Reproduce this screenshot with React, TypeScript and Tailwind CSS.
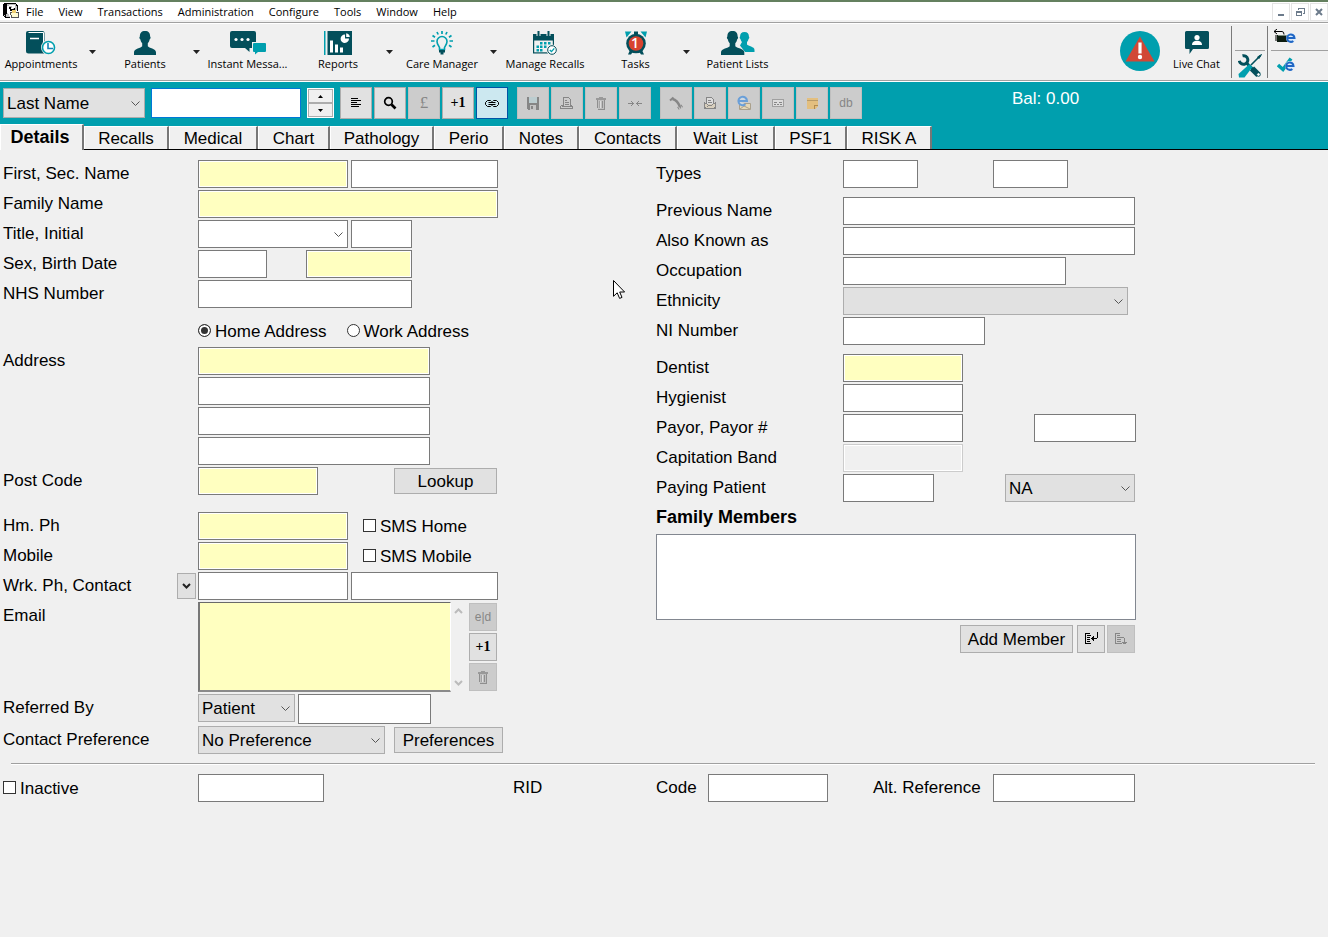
import { useState, type ReactNode } from 'react'
import clsx from 'clsx'

// ── Toolbar icons ──────────────────────────────────────────────────────────

const DARK = '#034f5b'
const TEAL = '#009fae'

function AppointmentsIcon() {
  return (
    <svg width="30" height="24" viewBox="0 0 30 24">
      <path d="M2 0H16.5a2 2 0 0 1 2 2V22.500H2.500A2.500 2.500 0 0 1 0 20V2a2 2 0 0 1 2-2Z" fill={DARK} />
      <path d="M2.500 1.500H17.500V21" stroke="#fff" fill="none" />
      <path d="M4 7.500h9" stroke="#fff" strokeWidth="1.500" />
      <circle cx="22.500" cy="16.500" r="7.500" fill="#f0f0f0" />
      <circle cx="22.500" cy="16.500" r="6" fill="#fff" stroke={TEAL} strokeWidth="1.600" />
      <path d="M22 12v5.500h5" stroke="#1583b5" strokeWidth="1.600" fill="none" />
    </svg>
  )
}

function PersonIcon() {
  return (
    <svg width="22" height="24" viewBox="0 0 22 24">
      <path d="M11 0c3.500 0 5.300 2 5.100 5.500.8.300.6 2.400-.5 3-.3 2-1 3-1.800 3.700v3c1 1.800 8.200 2 8.200 6.300V24H0v-2.500c0-4.300 7.200-4.500 8.200-6.300v-3C7.400 11.500 6.700 10.500 6.400 8.500c-1.100-.6-1.300-2.700-.5-3C5.700 2 7.500 0 11 0Z" fill={DARK} />
    </svg>
  )
}

function MessageIcon() {
  return (
    <svg width="36" height="24" viewBox="0 0 36 24">
      <path d="M2 0H24a2 2 0 0 1 2 2V11h-4v6H19.500V21L15 17H2a2 2 0 0 1-2-2V2a2 2 0 0 1 2-2Z" fill={DARK} />
      <g fill="#fff"><circle cx="6" cy="8.500" r="1.600" /><circle cx="12" cy="8.500" r="1.600" /><circle cx="18" cy="8.500" r="1.600" /></g>
      <path d="M24 12H35a1 1 0 0 1 1 1v7a1 1 0 0 1-1 1H28l-3 2.500V21H24a1 1 0 0 1-1-1V13a1 1 0 0 1 1-1Z" fill={TEAL} />
    </svg>
  )
}

function ReportsIcon() {
  return (
    <svg width="28" height="24" viewBox="0 0 28 24">
      <path d="M0 0h1.500v24H0z" fill={TEAL} />
      <path d="M3.500 0H28v24H3.500z" fill={DARK} />
      <path d="M6 9.500h3V21.500H6zM11 13.500h3v8h-3zM16 16.500h3v5h-3z" fill="#fff" />
      <path d="M21 3.500V7.500H25A4.200 4.200 0 1 1 21 3.500Z" fill="#fff" />
      <path d="M22.200 2.200A4.200 4.200 0 0 1 25.800 6H22.200Z" fill="#fff" />
    </svg>
  )
}

function BulbIcon() {
  return (
    <svg width="22" height="24" viewBox="0 0 22 24" fill="none">
      <path d="M8.500 18.500v-2C7.500 14.500 6 13 6 10.500a5 5 0 0 1 10 0c0 2.500-1.500 4-2.500 6v2Z" stroke={TEAL} strokeWidth="1.600" />
      <path d="M11 0v3M6 1l1.200 2.500M16 1l-1.200 2.500M1.500 4.500l2.500 1.800M20.500 4.500l-2.500 1.800M0 10h3.500M18.500 10H22M1.500 16l2.500-1.800M20.500 16l-2.500-1.800" stroke={TEAL} strokeWidth="1.700" />
      <path d="M8 19h6v2.500H12.500V23.500h-3V21.500H8z" fill={DARK} />
    </svg>
  )
}

function RecallsIcon() {
  return (
    <svg width="24" height="24" viewBox="0 0 24 24">
      <path d="M0 3H21V22.500H0z" fill={DARK} />
      <path d="M1.200 9.500h18.600v11.800H1.200z" fill="#f0f0f0" />
      <path d="M5.500 0v5M15.500 0v5" stroke="#f0f0f0" strokeWidth="4" />
      <path d="M5.500 0v5M15.500 0v5" stroke={DARK} strokeWidth="2" />
      <path d="M7 11h2.500v2.500H7zM11 11h2.500v2.500H11zM15 11h2.500v2.500H15zM3.500 14.500H6V17H3.500zM7 14.500h2.500V17H7zM11 14.500h2.500V17H11zM3.500 18H6v2.500H3.500zM7 18h2.500v2.500H7z" fill={TEAL} />
      <circle cx="19" cy="19" r="5.500" fill="#f0f0f0" />
      <circle cx="19" cy="19" r="4.300" fill="#fff" stroke={DARK} />
      <path d="M16.800 19l1.700 1.600 2.800-3.200" stroke={TEAL} strokeWidth="1.400" fill="none" />
    </svg>
  )
}

function TasksIcon() {
  return (
    <svg width="22" height="24" viewBox="0 0 22 24">
      <path d="M0 0.500l6.500 0L1.500 6.500zM22 0.500l-6.500 0 5 6z" fill={TEAL} />
      <path d="M9 0.500h4v3H9z" fill={DARK} />
      <path d="M5 19l-2 4.500h3l2-3zM17 19l2 4.500h-3l-2-3z" fill={DARK} />
      <circle cx="11" cy="12.500" r="9.800" fill={DARK} />
      <circle cx="11" cy="12.500" r="7.300" fill="#d8432f" />
      <text x="10" y="17" textAnchor="middle" fontFamily="Open Sans, sans-serif" fontSize="14" fontWeight="600" fill="#fff">1</text>
    </svg>
  )
}

function PeopleIcon() {
  return (
    <svg width="34" height="24" viewBox="0 0 34 24">
      <path d="M23.500 1c3 0 4.600 1.800 4.400 4.500.7.300.5 2-.4 2.600-.3 1.500-.8 2.400-1.500 3v2.500c1 1.700 7.500 1.900 7.500 5.500v2H24L19 14.500 21 11.100c-.7-.6-1.200-1.500-1.500-3-.9-.6-1.100-2.300-.4-2.600C18.900 2.800 20.500 1 23.500 1Z" fill={TEAL} />
      <path d="M11.500 0c3.500 0 5.300 2 5.100 5.500.8.300.6 2.400-.5 3-.3 2-1 3-1.800 3.700v3c1 1.800 9 2 9 6.300V24H0v-2.500c0-4.300 7.700-4.500 8.700-6.300v-3C7.900 11.500 7.200 10.500 6.900 8.500c-1.100-.6-1.300-2.700-.5-3C6.200 2 8 0 11.500 0Z" fill={DARK} />
    </svg>
  )
}

function LiveChatIcon() {
  return (
    <svg width="24" height="24" viewBox="0 0 24 24">
      <path d="M1.500 0H22.500A1.500 1.500 0 0 1 24 1.500V16.500A1.500 1.500 0 0 1 22.500 18H8L4.500 23V18h-3A1.500 1.500 0 0 1 0 16.500V1.500A1.500 1.500 0 0 1 1.500 0Z" fill={DARK} />
      <circle cx="12" cy="6.500" r="2.600" fill="#fff" />
      <path d="M7 14c0-3 2.300-4.300 5-4.300s5 1.300 5 4.300z" fill="#fff" />
    </svg>
  )
}

function AlertIcon() {
  return (
    <svg width="40" height="40" viewBox="0 0 40 40">
      <circle cx="20" cy="20" r="20" fill={TEAL} />
      <path d="M20 5.500L34.500 30.500H5.500z" fill="#d14836" />
      <path d="M18.400 11.500h3.200V22.500h-3.200z" fill="#fff" />
      <circle cx="20" cy="26" r="2.200" fill="#fff" />
    </svg>
  )
}

function ToolsIcon() {
  return (
    <svg width="24" height="24" viewBox="0 0 24 24" fill="none">
      <path d="M22.500 1.500L13 11" stroke={DARK} strokeWidth="1.600" />
      <path d="M23.500 0.500l-4 2.500 1.500 1.500z" fill={DARK} stroke={DARK} />
      <path d="M14 14.500L20.500 21" stroke={DARK} strokeWidth="6" />
      <path d="M8.500 9L15 15.500" stroke={DARK} strokeWidth="3" />
      <path d="M11.500 10L14.500 13 6.500 23.500H1L0.500 20z" fill={TEAL} />
      <path d="M4.500 1.800a4.300 4.300 0 1 1-3.200 5" stroke={DARK} strokeWidth="3" />
      <circle cx="20.500" cy="20.500" r="1.800" fill="#fff" stroke={DARK} />
    </svg>
  )
}

function Globe({ cx, cy }: { cx: number; cy: number }) {
  return (
    <g fill="none">
      <circle cx={cx} cy={cy} r="5" fill="#dcecfb" />
      <path d={`M${cx - 3} ${cy}h6.500a3.700 3.700 0 1 0-1.200 2.900`} stroke="#1f66c4" strokeWidth="2" />
    </g>
  )
}

function CardReaderIcon() {
  return (
    <svg width="24" height="16" viewBox="0 0 24 16">
      <path d="M1 2.500h8q2 0 2 3M1 2.500l3-2.500M1 2.500l3 2.500" stroke="#000" fill="none" />
      <path d="M2 6h3v6H2z" fill="#777" />
      <path d="M4 6H16v7H4z" fill="#0c1c10" />
      <path d="M5 6.500h9" stroke="#7b8b7b" />
      <Globe cx={18} cy={9} />
    </svg>
  )
}

function CheckGlobeIcon() {
  return (
    <svg width="20" height="16" viewBox="0 0 20 16">
      <path d="M1 8l5 4.500L14 1.500" stroke={TEAL} strokeWidth="3.500" fill="none" />
      <Globe cx={13} cy={9} />
    </svg>
  )
}

function AppIcon() {
  return (
    <svg width="16" height="16" viewBox="0 0 16 16" shapeRendering="crispEdges">
      <path d="M0.500 0.500H12.500L14.500 3V8M0.500 0.500V12.500L3 14.500H7" fill="#c0c0c0" stroke="#000" />
      <path d="M1 1h3v10H3v2L1 12zM6 4h2v2h3V4h1v4H7z" fill="#000" />
      <path d="M6 2h6v1H6zM4 5h2v5H4zM9 3h3v2H9z" fill="#fff" />
      <path d="M7.500 9.500H15.500V14.500H8.500z" fill="#fffbd0" stroke="#555" />
      <path d="M9 7h4v3H9z" fill="#f0d070" />
    </svg>
  )
}

// ── Small glyphs used on the square buttons ────────────────────────────────

const GREY = '#868686'

function Glyph({ children }: { children: ReactNode }) {
  return <svg width="16" height="16" viewBox="0 0 16 16" fill="none" shapeRendering="crispEdges">{children}</svg>
}

const linesGlyph = <Glyph><path d="M3 3.500h7M3 5.500h10M3 7.500h6M3 9.500h10M3 11.500h8" stroke="#000" /></Glyph>

const searchGlyph = (
  <svg width="16" height="16" viewBox="0 0 16 16" fill="none">
    <circle cx="6.500" cy="6.500" r="3.800" stroke="#000" strokeWidth="1.700" />
    <path d="M9.500 9.500l4 4" stroke="#000" strokeWidth="2.600" />
  </svg>
)

const linkGlyph = (
  <svg width="16" height="16" viewBox="0 0 16 16" fill="none" stroke="#000">
    <path d="M7.500 6.500L6.500 5.500H3.500L1.500 7.500V9.500L3.500 11.500H6.500L7.500 10.500M8.500 6.500L9.500 5.500h3l2 2v2l-2 2H9.500L8.500 10.500" />
    <path d="M4.500 7.500h7M4.500 9.500h7" />
  </svg>
)

const saveGlyph = (
  <Glyph>
    <path d="M2 2h12v13H3L2 14z" fill={GREY} />
    <path d="M4 2h8v6H4z" fill="#bccdd0" />
    <path d="M5 10h6v5H5z" fill="#c4c4c4" />
    <path d="M6 11h2v3H6z" fill={GREY} />
  </Glyph>
)

const printGlyph = (
  <Glyph>
    <path d="M4.500 10.500V2.500h5l2 2v6M1.500 10.500h3M11.500 10.500l2 1v2h-12v-3" stroke={GREY} />
    <path d="M6 5.500h2M6 7.500h4M6 9.500h4M3 11.500h9" stroke={GREY} />
  </Glyph>
)

const trashGlyph = (
  <Glyph>
    <path d="M3 3h10v2H3zM6 2h4v1H6z" fill="#999" />
    <path d="M4 5h8v9H5l-1-1z" fill="#c0c0c0" />
    <path d="M4.500 5v8M9.500 6v7M11.500 5v9M5 14.500h7" stroke="#8f8f8f" />
    <path d="M6.500 6v7" stroke="#a4a4a4" />
    <path d="M7.500 6v7" stroke="#ddd" />
  </Glyph>
)

const mergeGlyph = <Glyph><path d="M1 8.500h6M9 8.500h6M4.500 6v1M5.500 7v1M5.500 9v1M4.500 10v1M11.500 6v1M10.500 7v1M10.500 9v1M11.500 10v1" stroke={GREY} /></Glyph>

const phoneGlyph = (
  <svg width="16" height="16" viewBox="0 0 16 16" fill="none">
    <path d="M2 5.500L5.500 2.500" stroke={GREY} strokeWidth="2" />
    <path d="M4.500 4C9 5 10.500 8 12 12" stroke={GREY} strokeWidth="2.500" />
    <path d="M10 13.500L14.500 10.500" stroke={GREY} strokeWidth="3" strokeDasharray="1 1" />
  </svg>
)

const letterGlyph = (
  <Glyph>
    <path d="M2 8h12v6H2z" fill="#d8cfbd" />
    <path d="M4.500 9V2.500h5l2 2V9" fill="#ddd" stroke={GREY} />
    <path d="M6 5.500h3M6 7.500h4" stroke={GREY} />
    <path d="M2.500 7v6.500h11V7M3 8.500h1M5 9.500h1M6 10.500h4M10 9.500h1M12 8.500h1M3 12.500h1M5 11.500h1M12 12.500h1" stroke={GREY} />
  </Glyph>
)

const webMailGlyph = (
  <svg width="16" height="16" viewBox="0 0 16 16" fill="none">
    <path d="M3.500 8.500h11v6h-11z" fill="#e4d7b7" stroke="#aaa08c" />
    <path d="M4 14l4-3 6 3" stroke="#aaa08c" />
    <path d="M3 6h8a4.300 4.300 0 1 0-1.500 3.300" fill="#cfd8e0" stroke="#6a9fd8" strokeWidth="2" />
  </svg>
)

const cardGlyph = (
  <Glyph>
    <path d="M2.500 4.500h11v7h-11z" fill="#dcdcdc" stroke="#a0a0a0" />
    <path d="M4 7.500h3M9 7.500h3M4 9.500h2M7 9.500h2M10 9.500h2" stroke={GREY} />
  </Glyph>
)

const noteGlyph = (
  <Glyph>
    <path d="M3 3h11v8l-3 3H3z" fill="#e3bf7f" />
    <path d="M3 5.500h11" stroke="#b89b68" />
    <path d="M10.500 14v-3.500H14" stroke="#b08b50" />
  </Glyph>
)

const enterGlyph = (
  <Glyph>
    <path d="M7 2.500H2.500v10H8" stroke="#000" />
    <path d="M4 4.500h4M4 6.500h3M4 8.500h3M4 10.500h3M14.500 1v6M14 7.500H8M9.500 6v3M10.500 5v5" stroke="#000" />
  </Glyph>
)

const moveDownGlyph = (
  <Glyph>
    <path d="M7 2.500H2.500v10H9" stroke={GREY} />
    <path d="M4 4.500h3M4 6.500h4M4 8.500h4M4 10.500h4M8 6.500h3M11.500 7v6M9 11.500h5M10 12.500h3" stroke={GREY} />
  </Glyph>
)

const plusOne = <span className="font-['Liberation_Serif',serif] text-sm font-bold leading-4">+1</span>

// ── Controls ───────────────────────────────────────────────────────────────

function TextBox({ className, required, tall, ...rest }: React.InputHTMLAttributes<HTMLInputElement> & { tall?: boolean }) {
  return (
    <input
      type="text"
      className={clsx(
        'border px-1 shadow-[inset_0_0_0_1px_#fff] outline-none',
        tall ? 'h-[30px]' : 'h-7',
        rest.disabled ? 'border-[#ccc] bg-[#f0f0f0]' : 'border-[#7a7a7a]',
        !rest.disabled && (required ? 'bg-[#ffffc0]' : 'bg-white'),
        className,
      )}
      {...rest}
    />
  )
}

function DropDown({ options, className, white, ...rest }: {
  options: string[]; className: string; white?: boolean
} & React.SelectHTMLAttributes<HTMLSelectElement>) {
  return (
    <div className={clsx('relative', className)}>
      <select
        className={clsx('h-full w-full appearance-none border pl-[3px] pt-px outline-none', white ? 'border-[#7a7a7a] bg-white' : 'border-[#adadad] bg-[#e1e1e1]')}
        {...rest}
      >
        {options.map((o) => <option key={o}>{o}</option>)}
      </select>
      <svg className="pointer-events-none absolute right-[5px] top-1/2 -mt-[2px]" width="9" height="6" viewBox="0 0 9 6" fill="none">
        <path d="M0.500 0.500l4 4 4-4" stroke="#555" />
      </svg>
    </div>
  )
}

function SquareButton({ label, disabled, active, small, children }: {
  label: string; disabled?: boolean; active?: boolean; small?: boolean; children: ReactNode
}) {
  return (
    <button
      type="button"
      aria-label={label}
      disabled={disabled}
      className={clsx(
        'flex shrink-0 items-center justify-center border',
        small ? 'size-7' : 'size-8',
        disabled && 'border-[#bfbfbf] bg-[#ccc] text-[#868686]',
        active && 'border-[#0054a6] bg-[#cce8f0]',
        !disabled && !active && 'border-[#adadad] bg-[#e1e1e1]',
      )}
    >
      {children}
    </button>
  )
}

function PushButton({ className, children }: { className: string; children: ReactNode }) {
  return <button type="button" className={clsx('border border-[#adadad] bg-[#e1e1e1] pt-[2px] leading-[22px]', className)}>{children}</button>
}

function Check({ id, label }: { id: string; label: string }) {
  return (
    <span className="flex h-[26px] items-center gap-1">
      <input id={id} type="checkbox" className="size-[13px] appearance-none border border-[#333] bg-white checked:bg-[#333]" />
      <label htmlFor={id} className="pt-[3px]">{label}</label>
    </span>
  )
}

function Radio({ id, label, checked, onChange }: { id: string; label: string; checked: boolean; onChange: () => void }) {
  return (
    <span className="flex h-5 items-center gap-1">
      <input
        id={id}
        type="radio"
        name="addressType"
        checked={checked}
        onChange={onChange}
        className="size-[13px] appearance-none rounded-full border border-[#333] bg-white shadow-[inset_0_0_0_2px_#fff] checked:bg-[#333]"
      />
      <label htmlFor={id} className="pt-[3px]">{label}</label>
    </span>
  )
}

function Row({ label, htmlFor, narrow, children }: { label: string; htmlFor: string; narrow?: boolean; children: ReactNode }) {
  return (
    <div className="flex">
      <label htmlFor={htmlFor} className={clsx('shrink-0 leading-7', narrow ? 'w-[187px]' : 'w-[195px]')}>{label}</label>
      {children}
    </div>
  )
}

// ── Menu bar ───────────────────────────────────────────────────────────────

const MENUS = ['File', 'View', 'Transactions', 'Administration', 'Configure', 'Tools', 'Window', 'Help']

function MenuBar() {
  const box = 'flex h-[18px] w-[18px] items-center justify-center border border-[#e4e4e4] bg-white'
  return (
    <header className="border-b border-white border-t-2 border-t-[#64805f]">
      <div className="flex h-5 items-start border-b-2 border-[#f0f0f0] bg-white font-['Open_Sans',sans-serif] text-[11px]">
        <span className="ml-[3px] pt-px"><AppIcon /></span>
        <nav className="flex gap-[15px] pl-[7px]">
          {MENUS.map((m) => <button key={m} type="button" className="leading-5">{m}</button>)}
        </nav>
        <div className="ml-auto flex gap-px pt-px">
          <button type="button" aria-label="Minimise" className={box}><Glyph><path d="M5 11h6" stroke="#6c7b8b" strokeWidth="2" /></Glyph></button>
          <button type="button" aria-label="Restore" className={box}>
            <Glyph><path d="M6.500 6V4.500h6v5H11M6 4.500h7M4 8.500h6M4.500 7.500h5v4h-5z" stroke="#6c7b8b" /></Glyph>
          </button>
          <button type="button" aria-label="Close" className={box}>
            <svg width="16" height="16" viewBox="0 0 16 16"><path d="M5 5l6 6M11 5l-6 6" stroke="#6c7b8b" strokeWidth="2" /></svg>
          </button>
        </div>
      </div>
      <div className="h-px bg-[#a0a0a0]" />
    </header>
  )
}

// ── Main toolbar ───────────────────────────────────────────────────────────

const TOOLS = [
  { label: 'Appointments',     icon: <AppointmentsIcon />, size: 'w-[82px]',      menu: true },
  { label: 'Patients',         icon: <PersonIcon />,       size: 'w-[84px] pl-[2px]', menu: true },
  { label: 'Instant Messa...', icon: <MessageIcon />,      size: 'w-[83px]' },
  { label: 'Reports',          icon: <ReportsIcon />,      size: 'ml-2 w-[82px]', menu: true },
  { label: 'Care Manager',     icon: <BulbIcon />,         size: 'ml-[2px] w-[82px]', menu: true },
  { label: 'Manage Recalls',   icon: <RecallsIcon />,      size: 'w-[84px]' },
  { label: 'Tasks',            icon: <TasksIcon />,        size: 'ml-2 w-[81px]', menu: true },
  { label: 'Patient Lists',    icon: <PeopleIcon />,       size: 'w-[83px]' },
]

function Toolbar() {
  return (
    <div className="flex h-[57px] border-b border-[#a0a0a0] font-['Open_Sans',sans-serif] text-[11px]">
      {TOOLS.map((t) => (
        <div key={t.label} className="flex shrink-0">
          <button type="button" className={clsx('flex flex-col items-center whitespace-nowrap pt-[7px]', t.size)}>
            {t.icon}
            <span className="leading-[18px]">{t.label}</span>
          </button>
          {t.menu && (
            <button type="button" aria-label={`${t.label} menu`} className="flex w-5 items-center justify-center">
              <svg width="7" height="4" viewBox="0 0 7 4"><path d="M0 0h7L3.500 4z" fill="#222" /></svg>
            </button>
          )}
        </div>
      ))}
      <div className="ml-auto flex">
        <button type="button" aria-label="Alerts" className="pt-[7px]"><span className="block h-full"><AlertIcon /></span></button>
        <button type="button" className="flex w-[71px] flex-col items-center whitespace-nowrap pl-[2px] pt-[7px]">
          <LiveChatIcon />
          <span className="leading-[18px]">Live Chat</span>
        </button>
        <div className="my-[2px] w-px bg-[#7a7a7a]" />
        <button type="button" aria-label="Tools" className="ml-[3px] w-[30px]">
          <span className="block h-[27px] border-b border-[#a0a0a0]" />
          <span className="flex h-[29px] items-center justify-center"><ToolsIcon /></span>
        </button>
        <div className="my-[2px] ml-[2px] w-px bg-[#7a7a7a]" />
        <div className="ml-[3px] w-[57px]">
          <button type="button" aria-label="Card reader" className="flex h-[27px] w-full items-center border-b border-[#a0a0a0] pl-[2px]"><CardReaderIcon /></button>
          <button type="button" aria-label="Online check" className="flex h-7 w-full items-center pl-[6px]"><CheckGlobeIcon /></button>
        </div>
      </div>
    </div>
  )
}

// ── Search bar and tabs ────────────────────────────────────────────────────

function SearchBar() {
  return (
    <div className="flex h-[42px] items-center pl-[3px]">
      <DropDown options={['Last Name']} className="h-[30px] w-[142px]" aria-label="Search by" />
      <input type="text" aria-label="Search" className="ml-[6px] h-[30px] w-[150px] border border-[#0078d7] bg-white px-1 outline-none" />
      <div className="ml-[6px] flex h-[30px] w-[27px] flex-col border border-white">
        <button type="button" aria-label="Previous" className="flex flex-1 items-center justify-center border border-[#adadad] bg-[#f0f0f0]">
          <svg width="5" height="3" viewBox="0 0 5 3"><path d="M0 3h5L2.500 0z" /></svg>
        </button>
        <button type="button" aria-label="Next" className="flex flex-1 items-center justify-center border border-[#adadad] bg-[#f0f0f0]">
          <svg width="5" height="3" viewBox="0 0 5 3"><path d="M0 0h5L2.500 3z" /></svg>
        </button>
      </div>
      <div className="ml-[6px] flex gap-[2px]">
        <SquareButton label="List">{linesGlyph}</SquareButton>
        <SquareButton label="Find">{searchGlyph}</SquareButton>
        <SquareButton label="Account" disabled><span className="font-['Liberation_Serif',serif] leading-5">£</span></SquareButton>
        <SquareButton label="Add patient">{plusOne}</SquareButton>
        <SquareButton label="Link" active>{linkGlyph}</SquareButton>
      </div>
      <div className="ml-[9px] flex gap-[2px]">
        <SquareButton label="Save" disabled>{saveGlyph}</SquareButton>
        <SquareButton label="Print" disabled>{printGlyph}</SquareButton>
        <SquareButton label="Delete" disabled>{trashGlyph}</SquareButton>
        <SquareButton label="Merge" disabled>{mergeGlyph}</SquareButton>
      </div>
      <div className="ml-[9px] flex gap-[2px]">
        <SquareButton label="Call" disabled>{phoneGlyph}</SquareButton>
        <SquareButton label="Letter" disabled>{letterGlyph}</SquareButton>
        <SquareButton label="Email" disabled>{webMailGlyph}</SquareButton>
        <SquareButton label="Card" disabled>{cardGlyph}</SquareButton>
        <SquareButton label="Note" disabled>{noteGlyph}</SquareButton>
        <SquareButton label="Database" disabled><span className="text-xs leading-4">db</span></SquareButton>
      </div>
      <div className="ml-[150px] -mt-[9px] whitespace-nowrap text-white">Bal: 0.00</div>
    </div>
  )
}

const TABS = [
  { label: 'Details',   width: 'w-[84px] pr-[3px]' },
  { label: 'Recalls',   width: 'w-[85px]' },
  { label: 'Medical',   width: 'w-[89px]' },
  { label: 'Chart',     width: 'w-[72px]' },
  { label: 'Pathology', width: 'w-[104px]' },
  { label: 'Perio',     width: 'w-[70px]' },
  { label: 'Notes',     width: 'w-[75px]' },
  { label: 'Contacts',  width: 'w-[98px]' },
  { label: 'Wait List', width: 'w-[98px]' },
  { label: 'PSF1',      width: 'w-[72px]' },
  { label: 'RISK A',    width: 'w-[85px]' },
]

function Tabs() {
  const [current, setCurrent] = useState('Details')
  return (
    <div role="tablist" className="flex h-[26px] items-end border-b border-black">
      {TABS.map((t) => (
        <button
          key={t.label}
          type="button"
          role="tab"
          aria-selected={t.label === current}
          onClick={() => setCurrent(t.label)}
          className={clsx(
            'shrink-0 whitespace-nowrap border-l border-r-2 border-t border-l-white border-r-[#777] border-t-white bg-[#f0f0f0]',
            t.width,
            t.label === current ? '-mb-px h-[26px] pb-[2px] text-lg font-bold leading-[22px]' : 'h-[23px] leading-6',
          )}
        >
          {t.label}
        </button>
      ))}
    </div>
  )
}

// ── Patient details, left ──────────────────────────────────────────────────

function PersonalDetails() {
  const [home, setHome] = useState(true)
  return (
    <section>
      <div className="flex flex-col gap-[2px]">
        <Row label="First, Sec. Name" htmlFor="firstName">
          <TextBox id="firstName" required className="w-[150px]" />
          <TextBox aria-label="Second name" className="ml-[3px] w-[147px]" />
        </Row>
        <Row label="Family Name" htmlFor="familyName">
          <TextBox id="familyName" required className="w-[300px]" />
        </Row>
        <Row label="Title, Initial" htmlFor="title">
          <DropDown id="title" white options={['']} className="h-7 w-[150px]" />
          <TextBox aria-label="Initial" className="ml-[3px] w-[61px]" />
        </Row>
        <Row label="Sex, Birth Date" htmlFor="sex">
          <TextBox id="sex" className="w-[69px]" />
          <TextBox aria-label="Birth date" required className="ml-[39px] w-[106px]" />
        </Row>
        <Row label="NHS Number" htmlFor="nhs">
          <TextBox id="nhs" className="w-[214px]" />
        </Row>
      </div>

      <div className="mb-[5px] ml-[195px] mt-3 flex h-[22px] gap-5">
        <Radio id="homeAddress" label="Home Address" checked={home} onChange={() => setHome(true)} />
        <Radio id="workAddress" label="Work Address" checked={!home} onChange={() => setHome(false)} />
      </div>

      <div className="flex flex-col gap-[2px]">
        <Row label="Address" htmlFor="address1">
          <div className="flex flex-col gap-[2px]">
            <TextBox id="address1" required className="w-[232px]" />
            <TextBox aria-label="Address line 2" className="w-[232px]" />
            <TextBox aria-label="Address line 3" className="w-[232px]" />
            <TextBox aria-label="Address line 4" className="w-[232px]" />
          </div>
        </Row>
        <Row label="Post Code" htmlFor="postCode">
          <TextBox id="postCode" required className="w-[120px]" />
          <PushButton className="ml-[76px] h-[26px] w-[103px] self-center">Lookup</PushButton>
        </Row>
      </div>

      <div className="mt-[17px] flex flex-col gap-[2px]">
        <Row label="Hm. Ph" htmlFor="homePhone">
          <TextBox id="homePhone" required className="mr-[15px] w-[150px]" />
          <Check id="smsHome" label="SMS Home" />
        </Row>
        <Row label="Mobile" htmlFor="mobile">
          <TextBox id="mobile" required className="mr-[15px] w-[150px]" />
          <Check id="smsMobile" label="SMS Mobile" />
        </Row>
        <div className="flex">
          <label htmlFor="workPhone" className="w-[174px] leading-7">Wrk. Ph, Contact</label>
          <button type="button" aria-label="Phone type" className="mr-[2px] flex h-[26px] w-[19px] items-center justify-center self-center border border-[#adadad] bg-[#e1e1e1]">
            <svg width="9" height="6" viewBox="0 0 9 6" fill="none"><path d="M1 1l3.500 3.500L8 1" stroke="#222" strokeWidth="2" /></svg>
          </button>
          <TextBox id="workPhone" className="w-[150px]" />
          <TextBox aria-label="Work contact" className="ml-[3px] w-[147px]" />
        </div>
        <Row label="Email" htmlFor="email">
          <textarea id="email" className="h-[90px] w-[253px] resize-none border-b-2 border-l-2 border-r border-t border-b-[#8a8a8a] border-l-[#777] border-r-white border-t-[#696969] bg-[#ffffc0] px-1 outline-none" />
          <div className="flex w-[14px] flex-col items-center justify-between py-[6px]">
            <svg width="9" height="6" viewBox="0 0 9 6" fill="none"><path d="M1 5l3.500-3.500L8 5" stroke="#bbb" strokeWidth="2" /></svg>
            <svg width="9" height="6" viewBox="0 0 9 6" fill="none"><path d="M1 1l3.500 3.500L8 1" stroke="#bbb" strokeWidth="2" /></svg>
          </div>
          <div className="ml-1 flex flex-col gap-[2px] pt-px">
            <SquareButton small label="Edit email" disabled><span className="text-xs leading-4">e|d</span></SquareButton>
            <SquareButton small label="Add email">{plusOne}</SquareButton>
            <SquareButton small label="Delete email" disabled>{trashGlyph}</SquareButton>
          </div>
        </Row>
        <Row label="Referred By" htmlFor="referredBy">
          <DropDown id="referredBy" options={['Patient', 'Contact']} className="h-7 w-[97px]" />
          <TextBox aria-label="Referrer" tall className="ml-[3px] w-[133px]" />
        </Row>
        <Row label="Contact Preference" htmlFor="preference">
          <DropDown id="preference" options={['No Preference', 'Email', 'SMS']} className="h-7 w-[187px]" />
          <PushButton className="ml-[9px] h-[26px] w-[109px] self-center">Preferences</PushButton>
        </Row>
      </div>
    </section>
  )
}

// ── Patient details, right ─────────────────────────────────────────────────

function PracticeDetails() {
  return (
    <section>
      <Row narrow label="Types" htmlFor="type1">
        <TextBox id="type1" className="w-[75px]" />
        <TextBox aria-label="Second type" className="ml-[75px] w-[75px]" />
      </Row>

      <div className="mt-[9px] flex flex-col gap-[2px]">
        <Row narrow label="Previous Name" htmlFor="previousName"><TextBox id="previousName" className="w-[292px]" /></Row>
        <Row narrow label="Also Known as" htmlFor="alias"><TextBox id="alias" className="w-[292px]" /></Row>
        <Row narrow label="Occupation" htmlFor="occupation"><TextBox id="occupation" className="w-[223px]" /></Row>
        <Row narrow label="Ethnicity" htmlFor="ethnicity"><DropDown id="ethnicity" options={['']} className="h-7 w-[285px]" /></Row>
        <Row narrow label="NI Number" htmlFor="ni"><TextBox id="ni" className="w-[142px]" /></Row>
      </div>

      <div className="mt-[9px] flex flex-col gap-[2px]">
        <Row narrow label="Dentist" htmlFor="dentist"><TextBox id="dentist" required className="w-[120px]" /></Row>
        <Row narrow label="Hygienist" htmlFor="hygienist"><TextBox id="hygienist" className="w-[120px]" /></Row>
        <Row narrow label="Payor, Payor #" htmlFor="payor">
          <TextBox id="payor" className="w-[120px]" />
          <TextBox aria-label="Payor number" className="ml-[71px] w-[102px]" />
        </Row>
        <Row narrow label="Capitation Band" htmlFor="capitation"><TextBox id="capitation" disabled className="w-[120px]" /></Row>
        <Row narrow label="Paying Patient" htmlFor="payingPatient">
          <TextBox id="payingPatient" className="w-[91px]" />
          <DropDown aria-label="Paying patient type" options={['NA']} className="ml-[71px] h-7 w-[130px]" />
        </Row>
      </div>

      <div className="mt-[2px] w-[480px]">
        <label htmlFor="family" className="block text-lg font-bold leading-[26px]">Family Members</label>
        <select id="family" multiple className="mt-1 block h-[86px] w-full border border-[#828790] bg-white outline-none" />
        <div className="mt-[5px] flex justify-end gap-[2px] pr-px">
          <PushButton className="mr-[2px] h-7 w-[113px]">Add Member</PushButton>
          <SquareButton small label="Open member">{enterGlyph}</SquareButton>
          <SquareButton small label="Move member" disabled>{moveDownGlyph}</SquareButton>
        </div>
      </div>
    </section>
  )
}

function Footer() {
  return (
    <footer className="flex">
      <div className="w-[195px]"><Check id="inactive" label="Inactive" /></div>
      <TextBox aria-label="Inactive since" className="w-[126px]" />
      <span className="ml-[189px] w-[143px] leading-7">RID</span>
      <label htmlFor="code" className="w-[52px] leading-7">Code</label>
      <TextBox id="code" className="w-[120px]" />
      <label htmlFor="altRef" className="ml-[45px] w-[120px] leading-7">Alt. Reference</label>
      <TextBox id="altRef" className="w-[142px]" />
    </footer>
  )
}

// ── Page ───────────────────────────────────────────────────────────────────

export default function App() {
  return (
    <div className="relative min-h-screen bg-[#f0f0f0] font-['Liberation_Sans',Arial,sans-serif] text-[17px] leading-5 text-black">
      <MenuBar />
      <Toolbar />
      <div className="border-t border-white bg-[#009fae]">
        <SearchBar />
        <Tabs />
      </div>

      <main className="pl-[3px] pt-[10px]">
        <div className="grid grid-cols-[653px_minmax(0,1fr)]">
          <PersonalDetails />
          <PracticeDetails />
        </div>
        <hr className="ml-2 mr-[13px] mt-[9px] h-[2px] border-b border-t border-b-white border-t-[#a0a0a0]" />
        <div className="pt-[9px]"><Footer /></div>
      </main>

      {/* mouse pointer */}
      <svg className="pointer-events-none absolute left-[613px] top-[280px]" width="12" height="19" viewBox="0 0 12 19">
        <path d="M0.500 0.500V16.300L4.200 12.800 6.600 18.400 9 17.400 6.700 12H11.600Z" fill="#fff" stroke="#000" />
      </svg>
    </div>
  )
}
